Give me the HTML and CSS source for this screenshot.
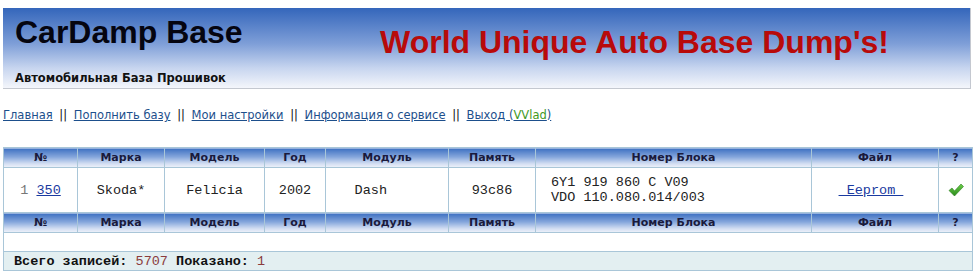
FILE: index.html
```html
<!DOCTYPE html>
<html lang="ru">
<head>
    <meta charset="UTF-8">
    <title>CarDamp Base</title>
    <link rel="stylesheet" href="styles.css">
</head>
<body>
    <div class="header">
        <div class="brand">
            <h1 class="brand-title">CarDamp Base</h1>
            <div class="brand-sub">Автомобильная База Прошивок</div>
        </div>
        <div class="slogan">World Unique Auto Base Dump's!</div>
    </div>

    <div class="nav">
        <a href="#">Главная</a> <span class="sep">||</span>
        <a href="#">Пополнить базу</a> <span class="sep">||</span>
        <a href="#">Мои настройки</a> <span class="sep">||</span>
        <a href="#">Информация о сервисе</a> <span class="sep">||</span>
        <a href="#">Выход (<span class="user">VVlad</span>)</a>
    </div>

    <table class="dumps">
        <colgroup>
            <col class="c-num">
            <col class="c-make">
            <col class="c-model">
            <col class="c-year">
            <col class="c-module">
            <col class="c-mem">
            <col class="c-block">
            <col class="c-file">
            <col class="c-ok">
        </colgroup>
        <thead>
            <tr>
                <th>№</th>
                <th>Марка</th>
                <th>Модель</th>
                <th>Год</th>
                <th>Модуль</th>
                <th>Память</th>
                <th>Номер Блока</th>
                <th>Файл</th>
                <th>?</th>
            </tr>
        </thead>
        <tbody>
            <tr class="row">
                <td><span class="idx">1</span> <a href="#">350</a></td>
                <td>Skoda*</td>
                <td>Felicia</td>
                <td>2002</td>
                <td>Dash&nbsp;&nbsp;&nbsp;&nbsp;</td>
                <td>93c86</td>
                <td class="block">6Y1 919 860 C V09<br>VDO 110.080.014/003</td>
                <td><a href="#">&nbsp;Eeprom&nbsp;</a>&nbsp;</td>
                <td>
                    <svg class="check" width="16" height="14" viewBox="0 0 16 14">
                        <defs>
                            <linearGradient id="g" x1="0" y1="0" x2="0" y2="1">
                                <stop offset="0" stop-color="#6ccf4a"/>
                                <stop offset="1" stop-color="#2a8a1a"/>
                            </linearGradient>
                        </defs>
                        <path d="M1 7.5 L4 5 L6.5 8 L13 1 L15.5 3.5 L6.5 13 Z" fill="url(#g)" stroke="#2d7d20" stroke-width="0.6"/>
                    </svg>
                </td>
            </tr>
            <tr class="head">
                <th>№</th>
                <th>Марка</th>
                <th>Модель</th>
                <th>Год</th>
                <th>Модуль</th>
                <th>Память</th>
                <th>Номер Блока</th>
                <th>Файл</th>
                <th>?</th>
            </tr>
            <tr class="empty">
                <td colspan="9"></td>
            </tr>
        </tbody>
        <tfoot>
            <tr>
                <td colspan="9"><b>Всего записей:</b> <span class="val">5707</span> <b>Показано:</b> <span class="val">1</span></td>
            </tr>
        </tfoot>
    </table>
</body>
</html>
```

FILE: styles.css
```css
/* Base */
body {
    margin: 0;
    padding: 8px 3px 0 3px;
    background: #fff;
    font-family: "Liberation Sans", Arial, sans-serif;
    color: #000;
}

/* Header */
.header {
    display: flex;
    height: 81px;
    box-sizing: border-box;
    padding: 6px 0 0 12px;
    border-right: 1px solid #c4c8d0;
    border-bottom: 1px solid #c4c8d0;
    background: linear-gradient(to bottom, #3466bb 0%, #7f9fd8 45%, #c7d5ef 75%, #f4f6fb 100%);
}

.brand {
    width: 365px;
}

.brand-title {
    margin: 0;
    font-size: 32px;
    font-weight: bold;
    line-height: 37px;
    color: #050510;
}

.brand-sub {
    margin-top: 20px;
    font-family: "DejaVu Sans", Verdana, sans-serif;
    font-size: 11.5px;
    font-weight: bold;
    color: #111;
}

.slogan {
    padding-top: 10px;
    font-size: 32px;
    font-weight: bold;
    line-height: 37px;
    color: #b80a0a;
}

/* Navigation */
.nav {
    margin: 19px 0 0 0;
    height: 22px;
    font-family: "DejaVu Sans", Tahoma, sans-serif;
    font-size: 11.5px;
    color: #000;
}

.nav a {
    color: #1d4f8c;
}

.nav .sep {
    margin: 0 3px;
    color: #111;
}

.nav .user {
    color: #3f9a1f;
}

/* Table */
.dumps {
    margin-top: 17px;
    width: 969px;
    border-collapse: collapse;
    table-layout: fixed;
    border: 1px solid #a5c4d4;
    font-family: "Liberation Mono", "Courier New", monospace;
    font-size: 13.5px;
    color: #222;
}

.c-num { width: 74px; }
.c-make { width: 87px; }
.c-model { width: 100px; }
.c-year { width: 61px; }
.c-module { width: 123px; }
.c-mem { width: 87px; }
.c-block { width: 276px; }
.c-file { width: 127px; }
.c-ok { width: 34px; }

.dumps th {
    height: 19px;
    padding: 0;
    border: 1px solid #a9c6d8;
    background: linear-gradient(to bottom, #3d70c2 0%, #86a7dc 45%, #d3def2 80%, #eef2fa 100%);
    font-family: "DejaVu Sans", Verdana, sans-serif;
    font-size: 11px;
    font-weight: bold;
    color: #1a1a3c;
    text-align: center;
}

.dumps td {
    padding: 0;
    border: 1px solid #a9c6d8;
    text-align: center;
}

.row td {
    height: 44px;
}

.row .block {
    text-align: left;
    padding-left: 15px;
    line-height: 15px;
}

.dumps a {
    color: #1a3aa0;
}

.idx {
    color: #777;
}

.check {
    vertical-align: middle;
}

.empty td {
    height: 18px;
}

.dumps tfoot td {
    height: 18px;
    padding-left: 10px;
    text-align: left;
    background: #e3eff1;
    color: #111;
}

.dumps tfoot .val {
    color: #8a3c3c;
}
```
